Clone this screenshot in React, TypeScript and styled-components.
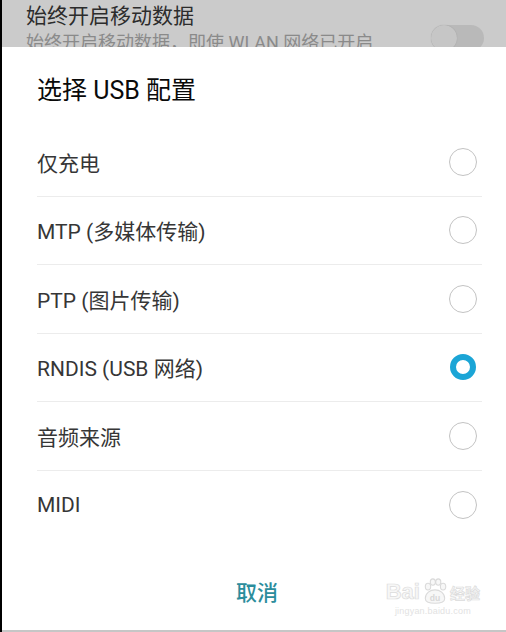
import React from "react";
import styled, { createGlobalStyle } from "styled-components";

const GlobalStyle = createGlobalStyle`
  html, body {
    margin: 0;
    padding: 0;
    background: #000;
  }
  body {
    font-family: Roboto, "Noto Sans CJK SC", "Noto Sans", sans-serif;
  }
`;

const Screen = styled.div`
  width: 504px;
  height: 632px;
  border-left: 2px solid #000;
  display: flex;
  flex-direction: column;
  overflow: hidden;
  background: #c9c9c9;
`;

const Backdrop = styled.div`
  height: 47px;
  flex-shrink: 0;
  background: #cbcbcb;
  padding-left: 24px;
  padding-right: 22px;
  display: flex;
  justify-content: space-between;
  overflow: hidden;
`;

const BackdropText = styled.div`
  display: flex;
  flex-direction: column;
  padding-top: 2px;
`;

const BackdropTitle = styled.div`
  font-size: 21px;
  line-height: 29px;
  color: #2c2c2c;
`;

const BackdropSub = styled.div`
  font-size: 18px;
  line-height: 24px;
  color: #8a8a8a;
  white-space: nowrap;
`;

const Toggle = styled.div`
  margin-top: 25px;
  width: 53px;
  height: 26px;
  border-radius: 13px;
  background: #b9b9b9;
  display: flex;
  align-items: center;
  flex-shrink: 0;
`;

const Knob = styled.div`
  width: 26px;
  height: 26px;
  border-radius: 50%;
  background: #c6c6c6;
  box-shadow: 0 0 1px rgba(0, 0, 0, 0.2);
`;

const Dialog = styled.div`
  flex: 1;
  background: #fff;
  display: flex;
  flex-direction: column;
  position: relative;
  border-bottom: 2px solid #c6c6c6;
`;

const Title = styled.h1`
  margin: 0;
  height: 81px;
  padding-left: 35px;
  display: flex;
  align-items: center;
  font-size: 25px;
  font-weight: 400;
  color: #0a0a0a;
`;

const List = styled.div`
  display: flex;
  flex-direction: column;
  padding-left: 35px;
  padding-right: 24px;
`;

const Row = styled.div<{ $last?: boolean }>`
  box-sizing: border-box;
  height: 68.5px;
  display: flex;
  align-items: center;
  justify-content: space-between;
  border-bottom: ${(p) => (p.$last ? "none" : "1px solid #ececec")};
`;

const Label = styled.span`
  font-size: 21px;
  color: #363636;
`;

const Radio = styled.span<{ $checked?: boolean }>`
  box-sizing: border-box;
  width: ${(p) => (p.$checked ? "26px" : "28px")};
  height: ${(p) => (p.$checked ? "26px" : "28px")};
  margin-right: ${(p) => (p.$checked ? "6px" : "5px")};
  border-radius: 50%;
  border: ${(p) => (p.$checked ? "6px solid #1ba5d6" : "1.5px solid #c3c3c3")};
  background: #fff;
`;

const Footer = styled.div`
  flex: 1;
  display: flex;
  justify-content: center;
  align-items: center;
  padding-top: 12px;
  padding-left: 6px;
`;

const CancelButton = styled.button`
  border: none;
  background: none;
  font-family: inherit;
  font-size: 21px;
  font-weight: 500;
  color: #2b8d9c;
  padding: 4px 12px;
`;

const Watermark = styled.div`
  position: absolute;
  right: 26px;
  bottom: 14px;
  display: flex;
  flex-direction: column;
  align-items: center;
  pointer-events: none;
`;

const WatermarkLogo = styled.div`
  display: flex;
  align-items: center;
  gap: 1px;
  font-family: "Liberation Sans", "Noto Sans CJK SC", sans-serif;
  font-weight: 700;
  color: #f7f7f7;
  -webkit-text-stroke: 0.7px #dcdcdc;
`;

const WatermarkWord = styled.span<{ $size: number }>`
  font-size: ${(p) => p.$size}px;
`;

const WatermarkSite = styled.span`
  font-family: "Liberation Sans", sans-serif;
  font-size: 9px;
  color: #e2e2e2;
  letter-spacing: 0.2px;
`;

const Paw = () => (
  <svg width="28" height="28" viewBox="0 0 26 26" fill="#f7f7f7" stroke="#dadada" strokeWidth="1">
    <ellipse cx="6.5" cy="8" rx="2.5" ry="3.2" />
    <ellipse cx="11" cy="3.8" rx="2.4" ry="3" />
    <ellipse cx="16" cy="3.8" rx="2.4" ry="3" />
    <ellipse cx="20.5" cy="8" rx="2.5" ry="3.2" />
    <path d="M4 19c0-5 4.5-8 9-8s9 3 9 8c0 3-3.5 4.5-9 4.5S4 22 4 19z" />
    <text x="13" y="21" fontSize="8" textAnchor="middle" fill="#d8d8d8" stroke="none" fontFamily="Liberation Sans">du</text>
  </svg>
);

const options = [
  "仅充电",
  "MTP (多媒体传输)",
  "PTP (图片传输)",
  "RNDIS (USB 网络)",
  "音频来源",
  "MIDI",
];

const App: React.FC = () => {
  const selected = 3;
  return (
    <>
      <GlobalStyle />
      <Screen>
        <Backdrop>
          <BackdropText>
            <BackdropTitle>始终开启移动数据</BackdropTitle>
            <BackdropSub>始终开启移动数据，即使 WLAN 网络已开启</BackdropSub>
          </BackdropText>
          <Toggle>
            <Knob />
          </Toggle>
        </Backdrop>
        <Dialog>
          <Title>选择 USB 配置</Title>
          <List>
            {options.map((o, i) => (
              <Row key={o} $last={i === options.length - 1}>
                <Label>{o}</Label>
                <Radio $checked={i === selected} />
              </Row>
            ))}
          </List>
          <Footer>
            <CancelButton>取消</CancelButton>
          </Footer>
          <Watermark>
            <WatermarkLogo>
              <WatermarkWord $size={22}>Bai</WatermarkWord>
              <Paw />
              <WatermarkWord $size={15}>经验</WatermarkWord>
            </WatermarkLogo>
            <WatermarkSite>jingyan.baidu.com</WatermarkSite>
          </Watermark>
        </Dialog>
      </Screen>
    </>
  );
};

export default App;
